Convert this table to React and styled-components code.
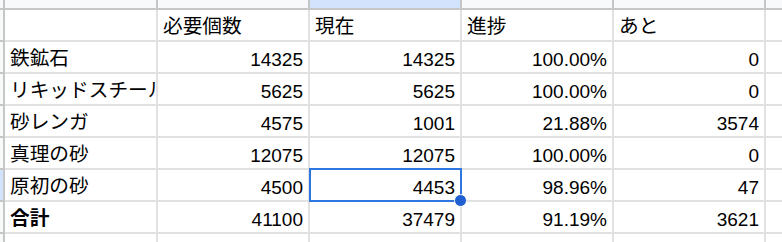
import React from 'react';
import styled, { createGlobalStyle } from 'styled-components';

const GlobalStyle = createGlobalStyle`
    html, body {
        margin: 0;
        padding: 0;
        background: #ffffff;
    }
    body {
        font-family: "Liberation Sans", "Noto Sans CJK JP", Arial, sans-serif;
    }
`

const headers = ['', '必要個数', '現在', '進捗', 'あと', ''];

const rows = [
    { name: '鉄鉱石', need: '14325', now: '14325', pct: '100.00%', left: '0' },
    { name: 'リキッドスチール', need: '5625', now: '5625', pct: '100.00%', left: '0' },
    { name: '砂レンガ', need: '4575', now: '1001', pct: '21.88%', left: '3574' },
    { name: '真理の砂', need: '12075', now: '12075', pct: '100.00%', left: '0' },
    { name: '原初の砂', need: '4500', now: '4453', pct: '98.96%', left: '47', selected: true },
    { name: '合計', need: '41100', now: '37479', pct: '91.19%', left: '3621', bold: true },
];

export default function App() {
    return (
        <>
            <GlobalStyle />
            <Sheet>
                {/* column header strip */}
                <Corner />
                {headers.map((_, i) => (
                    <ColHead key={'h' + i} active={i === 2} />
                ))}

                {/* title row */}
                <RowHead />
                {headers.map((h, i) => (
                    <Cell key={'t' + i} cjk>{h}</Cell>
                ))}

                {rows.map((r, ri) => (
                    <React.Fragment key={ri}>
                        <RowHead active={r.selected} />
                        <Cell cjk bold={r.bold}>{r.name}</Cell>
                        <Cell num>{r.need}</Cell>
                        <Cell num>
                            {r.now}
                            {r.selected && (
                                <Selection>
                                    <Handle />
                                </Selection>
                            )}
                        </Cell>
                        <Cell num>{r.pct}</Cell>
                        <Cell num>{r.left}</Cell>
                        <Cell />
                    </React.Fragment>
                ))}

                <RowHead />
                {headers.map((_, i) => (
                    <Cell key={'e' + i} />
                ))}
            </Sheet>
        </>
    )
}

const Sheet = styled.div`
    display: grid;
    grid-template-columns: 5px 153px 152px 152px 152px 152px 152px;
    grid-template-rows: 10px repeat(8, 32px);
    width: 782px;
    height: 242px;
    overflow: hidden;
    background: #ffffff;
`

const Corner = styled.div`
    box-sizing: border-box;
    background: #f8f9fa;
    border-right: 2px solid #c4c7c5;
    border-bottom: 2px solid #c4c7c5;
`

const ColHead = styled.div`
    box-sizing: border-box;
    background: ${p => (p.active ? '#d3e3fd' : '#f8f9fa')};
    border-right: 2px solid #c4c7c5;
    border-bottom: 2px solid #c4c7c5;
`

const RowHead = styled.div`
    box-sizing: border-box;
    background: ${p => (p.active ? '#d3e3fd' : '#f8f9fa')};
    border-right: 2px solid #c4c7c5;
    border-bottom: 2px solid #c4c7c5;
`

const Cell = styled.div`
    position: relative;
    box-sizing: border-box;
    display: flex;
    align-items: flex-end;
    justify-content: ${p => (p.num ? 'flex-end' : 'flex-start')};
    padding: 0 5px 3px 5px;
    border-right: 2px solid #e1e1e1;
    border-bottom: 2px solid #e1e1e1;
    font-size: ${p => (p.cjk ? '19.7px' : '19px')};
    line-height: 1;
    font-weight: ${p => (p.bold ? 700 : 400)};
    color: #000000;
    white-space: nowrap;
    overflow: ${p => (p.num ? 'visible' : 'hidden')};
`

const Selection = styled.div`
    position: absolute;
    top: -2px;
    left: -1px;
    right: -2px;
    bottom: -2px;
    border: 2px solid #2f76e0;
    z-index: 2;
    pointer-events: none;
`

const Handle = styled.div`
    position: absolute;
    right: -7px;
    bottom: -7px;
    width: 11px;
    height: 11px;
    border-radius: 50%;
    background: #1f5fd1;
    border: 1px solid #ffffff;
`
